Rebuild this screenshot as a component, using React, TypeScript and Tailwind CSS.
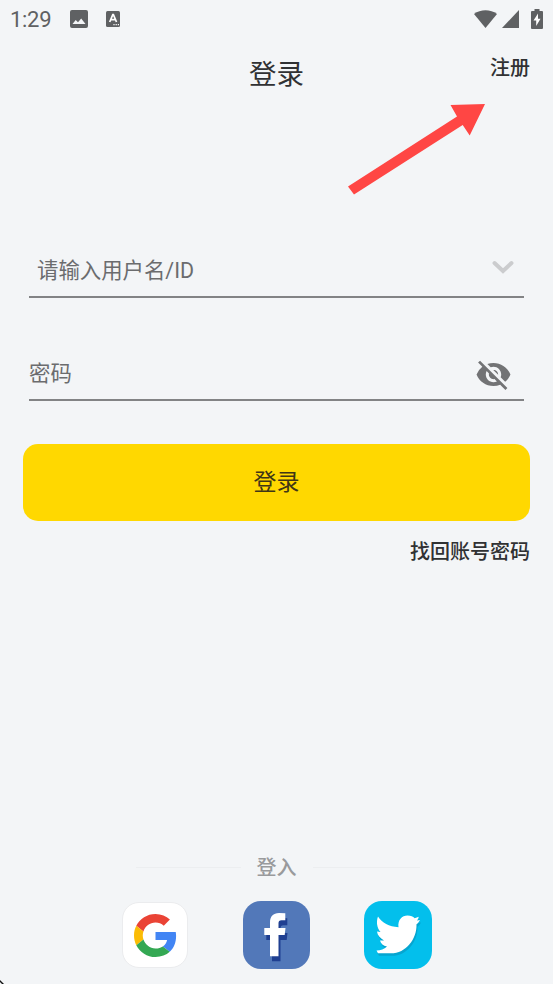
import { useState } from 'react';
import type { ReactNode } from 'react';

function StatusBar() {
  return (
    <div className="flex h-[38px] items-center pr-[10px] pl-[10px] text-[#5f6163]">
      <span className="w-[60px] pt-px text-[22px] leading-none tracking-[-0.3px]">1:29</span>
      <svg className="h-[18px] w-[18px]" viewBox="0 0 18 18" fill="currentColor">
        <path
          fillRule="evenodd"
          d="M2 0h14a2 2 0 0 1 2 2v14a2 2 0 0 1-2 2H2a2 2 0 0 1-2-2V2a2 2 0 0 1 2-2zM2.500 14h13L11.200 8.400 8 12.300 5.700 9.900z"
        />
      </svg>
      <svg className="ml-[18px] h-4 w-[14px]" viewBox="0 0 14 16" fill="none">
        <rect width="14" height="16" rx="1.500" fill="currentColor" />
        <path d="M3.700 11 6.800 3.600h.6L10.500 11M5 8.700h4.300" stroke="#fff" strokeWidth="1.700" />
        <path d="M7.400 13.700h1.200m1 0h1.200m1 0h1.200" stroke="#fff" strokeWidth="1.200" />
      </svg>
      <svg className="ml-auto h-[18px] w-[23px]" viewBox="0 0 23 18" fill="currentColor">
        <path d="M0 4C6.500-1 16.500-1 23 4L11.500 18z" />
      </svg>
      <svg className="ml-[5px] h-[18px] w-[17px]" viewBox="0 0 17 18" fill="currentColor">
        <path d="M17 0v18H0z" />
      </svg>
      <svg className="ml-3 h-5 w-3" viewBox="0 0 12 20">
        <path
          fill="currentColor"
          d="M3.500 0h5v2H11a1 1 0 0 1 1 1v16a1 1 0 0 1-1 1H1a1 1 0 0 1-1-1V3a1 1 0 0 1 1-1h2.500z"
        />
        <path fill="#fff" d="M7 4.500 2.500 11.500H5.200V17L9.500 9.700H7z" />
      </svg>
    </div>
  );
}

function Field({ label, inset, children }: { label: string; inset?: boolean; children: ReactNode }) {
  return (
    <div className="mx-[29px] flex h-[55px] items-center justify-between border-b-2 border-[#828385]">
      <span className={`pt-[2px] text-[21.400px] leading-none text-[#6b6c6e] ${inset ? 'pl-2' : ''}`}>{label}</span>
      {children}
    </div>
  );
}

function GoogleIcon() {
  return (
    <span className="flex h-[66px] w-[66px] items-center justify-center rounded-[17px] border border-[#ebecee] bg-white">
      <svg className="h-[43px] w-[43px]" viewBox="0 0 48 48">
        <path fill="#EA4335" d="M24 9.500c3.540 0 6.710 1.220 9.210 3.600l6.850-6.850C35.900 2.380 30.470 0 24 0 14.620 0 6.510 5.380 2.560 13.220l7.980 6.190C12.430 13.720 17.740 9.500 24 9.500z" />
        <path fill="#4285F4" d="M46.980 24.550c0-1.570-.15-3.090-.38-4.550H24v9.020h12.940c-.58 2.960-2.260 5.480-4.780 7.180l7.730 6c4.510-4.180 7.090-10.360 7.090-17.650z" />
        <path fill="#FBBC05" d="M10.530 28.590c-.48-1.450-.76-2.990-.76-4.590s.27-3.140.76-4.590l-7.980-6.190C.92 16.460 0 20.120 0 24c0 3.880.92 7.540 2.560 10.780l7.970-6.190z" />
        <path fill="#34A853" d="M24 48c6.480 0 11.930-2.130 15.890-5.810l-7.730-6c-2.150 1.450-4.920 2.300-8.160 2.300-6.260 0-11.570-4.220-13.470-9.910l-7.980 6.190C6.510 42.620 14.620 48 24 48z" />
      </svg>
    </span>
  );
}

const facebookMark =
  'M42.300 12.200V19.300H38.500C36.300 19.300 35.500 20.200 35.500 22.300V27H42.500L41.700 34H35.500V55.300H27V34H21.300V27H27V21.500C27 15.500 30.200 12 36 12z';

function FacebookIcon() {
  return (
    <svg className="h-[68px] w-[67px]" viewBox="0 0 67 68">
      <rect width="67" height="68" rx="18" fill="#5278b9" />
      <path d={facebookMark} fill="#1f3f91" transform="translate(2 5)" />
      <path d={facebookMark} fill="#fff" />
    </svg>
  );
}

const twitterMark =
  'M14 15.500C18 22 25 25.500 34.500 26.300C33.500 19 38 14.500 43.500 14.500C47 14.500 49 15.500 50.700 17.200L54.700 15.800C54.500 17.600 53.700 18.700 53 19.500L56 19C55 21 54 22.200 52.500 23.200C53 38 42 52.300 27 52.300H14L12.500 49.600C17 49.400 20 48 23 45.500C19 45 17 42.500 16 39.500H20C16 37 13.500 34.500 13 30.500L16.500 31C13 27 12 21 14 15.500z';

function TwitterIcon() {
  return (
    <svg className="h-[68px] w-[68px]" viewBox="0 0 68 68">
      <rect width="68" height="68" rx="18" fill="#03bfec" />
      <path d={twitterMark} fill="#06a5d0" transform="translate(1 2.500)" />
      <path d={twitterMark} fill="#fff" />
    </svg>
  );
}

export default function App() {
  const [hidden, setHidden] = useState(true);

  return (
    <div className="relative flex h-[984px] w-[553px] flex-col overflow-hidden bg-[#f3f5f7] font-[Roboto,'Noto_Sans_CJK_SC',sans-serif]">
      <StatusBar />

      <header className="grid h-[72px] grid-cols-3 px-[23px] text-[#303133]">
        <h1 className="col-start-2 pt-[23px] text-center text-[27.500px] leading-[28px]">登录</h1>
        <button className="h-5 justify-self-end pt-[20px] text-[20px] leading-5 font-medium">注册</button>
      </header>

      <div className="mt-[133px]">
        <Field label="请输入用户名/ID" inset>
          <svg className="mr-[10px] mb-[5px] h-[14px] w-[22px]" viewBox="0 0 22 14" fill="none">
            <path d="m2.500 3 8.500 8 8.500-8" stroke="#cbccce" strokeWidth="4" strokeLinecap="round" />
          </svg>
        </Field>
      </div>
      <div className="mt-12">
        <Field label="密码">
          <button className="mt-[3px] mr-[12px]" onClick={() => setHidden(!hidden)}>
            <svg className="h-[37px] w-[37px]" viewBox="0 0 24 24" fill="#727375">
              {hidden ? (
                <path d="M12 7c2.760 0 5 2.240 5 5 0 .650-.130 1.260-.360 1.830l2.920 2.920c1.510-1.260 2.700-2.890 3.430-4.750-1.730-4.390-6-7.500-11-7.500-1.400 0-2.740.250-3.980.700l2.160 2.160C10.740 7.130 11.350 7 12 7zM2 4.270l2.280 2.280.46.460A11.804 11.804 0 0 0 1 12c1.730 4.390 6 7.500 11 7.500 1.550 0 3.030-.300 4.380-.840l.42.420L19.730 22 21 20.730 3.270 3 2 4.270zM7.530 9.800l1.550 1.550c-.050.210-.080.430-.080.650 0 1.660 1.340 3 3 3 .220 0 .440-.030.650-.080l1.550 1.550c-.670.330-1.410.530-2.200.530-2.760 0-5-2.240-5-5 0-.790.200-1.530.530-2.200zm4.310-.780 3.150 3.150.020-.160c0-1.660-1.340-3-3-3l-.170.010z" />
              ) : (
                <path d="M12 4.500C7 4.500 2.730 7.610 1 12c1.730 4.390 6 7.500 11 7.500s9.270-3.110 11-7.500c-1.730-4.390-6-7.500-11-7.500zM12 17a5 5 0 1 1 0-10 5 5 0 0 1 0 10zm0-8a3 3 0 1 0 0 6 3 3 0 0 0 0-6z" />
              )}
            </svg>
          </button>
        </Field>
      </div>

      <button className="mx-[23px] mt-[43px] h-[77px] rounded-[15px] bg-[#ffd800] pt-[2px] text-[23px] text-[#3f3616]">
        登录
      </button>
      <button className="mt-[21px] mr-[23px] self-end text-[20px] leading-5 font-medium text-[#303133]">找回账号密码</button>

      <div className="mt-auto mb-6 flex items-center justify-center gap-4 pl-[2px] text-[20px] leading-5 font-medium text-[#999a9c]">
        <i className="h-px w-[105px] bg-[#eceef0]" />
        <span className="relative top-px">登入</span>
        <i className="h-px w-[107px] bg-[#eceef0]" />
      </div>
      <div className="mb-[15px] flex items-center justify-center gap-[54px] pl-px">
        <GoogleIcon />
        <div className="flex gap-[54px] pl-px">
          <FacebookIcon />
          <TwitterIcon />
        </div>
      </div>

      {/* pointer to the register link */}
      <svg className="absolute top-[103px] left-[347px] h-[93px] w-[139px]" viewBox="347 103 139 93">
        <path d="M485 104 450.500 105 457 116.500 348 186.500 354 194.500 462.700 125 469.700 135.500z" fill="#ff4644" />
      </svg>
      <svg className="absolute bottom-0 left-0 h-1 w-1" viewBox="0 0 4 4">
        <path d="M0 0 4 4H2L0 2z" fill="#111" />
      </svg>
    </div>
  );
}
